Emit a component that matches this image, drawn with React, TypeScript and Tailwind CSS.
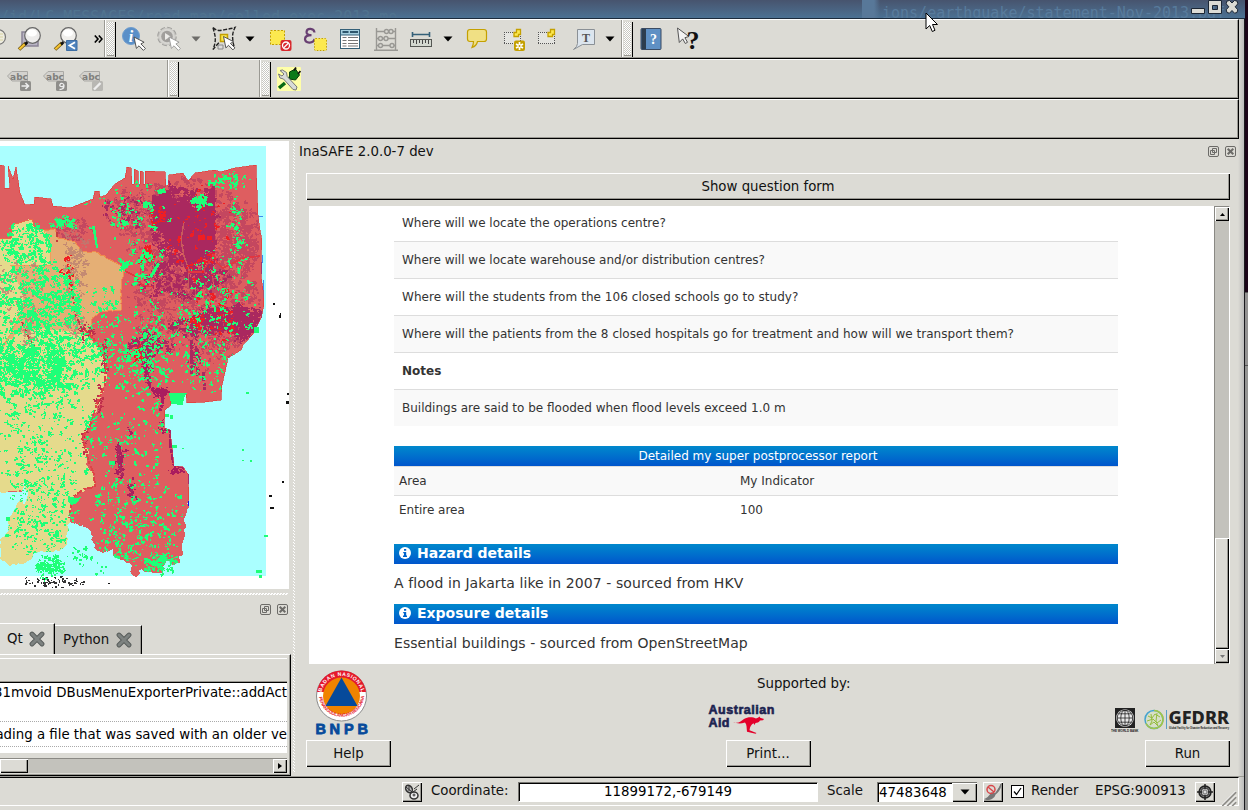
import React from 'react';

/* ---------- shared bits ---------- */

const bevel =
  'bg-[#dcdbd5] shadow-[inset_1px_1px_0_#fff,inset_-1px_-1px_0_#000,inset_-2px_-2px_0_#9a9993]';

function Slot({ w, children }: { w: number; children?: React.ReactNode }) {
  return (
    <div className="flex h-full shrink-0 items-center justify-center" style={{ width: w }}>
      {children}
    </div>
  );
}

function Grip() {
  return (
    <div className="flex h-full w-[12px] shrink-0">
      <div className="w-px bg-[#9a9993]" />
      <div className="w-px bg-white" />
      <div className="mt-[2px] mb-px ml-px w-[7px] border-b border-[#9a9993] bg-[conic-gradient(#fff_25%,#c9c8c2_0_50%,#fff_0_75%,#c9c8c2_0)] bg-[length:2px_2px]" />
      <div className="mt-[2px] ml-px w-px bg-black" />
    </div>
  );
}

function Arrow({ c = '#000' }: { c?: string }) {
  return (
    <svg width="10" height="6" viewBox="0 0 10 6" className="shrink-0">
      <path d="M0.5 0.5h9L5 5.5z" fill={c} />
    </svg>
  );
}

function Pointer({ x, y, o = 1 }: { x: number; y: number; o?: number }) {
  return (
    <path
      d="M0 0l2.4 11.4 2.6-2.6 4.4 4.6 2-2-4.5-4.5 3.2-1.7z"
      transform={`translate(${x} ${y})`}
      fill="#fff"
      stroke={o < 1 ? '#999' : '#444'}
      strokeWidth="0.9"
    />
  );
}

function Glass({ extra, tag }: { extra?: boolean; tag?: boolean }) {
  return (
    <svg width="26" height="26" viewBox="0 0 26 26" className="shrink-0">
      {extra && <path d="M5 6h16v14H5z" fill="#b9b4c4" stroke="#8a8496" strokeWidth="1.5" />}
      <path d="M2 23.500L9 17" stroke="#6b5210" strokeWidth="3.600" />
      <path d="M2.300 23.200L8.200 17.700" stroke="#f4c232" strokeWidth="2.200" />
      <path d="M8 18.500l2.500-2.500" stroke="#111" strokeWidth="2.500" />
      <circle cx="15.500" cy="9.500" r="7.800" fill="#f1f0ee" fillOpacity="0.93" stroke="#666" strokeWidth="1.200" />
      <ellipse cx="15" cy="7" rx="5" ry="3.500" fill="#fff" />
      {tag && (
        <g>
          <path d="M13.500 14.500h10.500v10H13.500z" fill="#4f83bd" stroke="#3d6da3" />
          <path d="M22 16.300l-5.500 3.200 5.500 3.200" fill="none" stroke="#fff" strokeWidth="1.800" />
        </g>
      )}
    </svg>
  );
}

function DockButtons() {
  return (
    <svg width="28" height="11" viewBox="0 0 28 11" className="shrink-0" fill="none" stroke="#6c6b68">
      <rect x="0.500" y="0.500" width="10" height="10" rx="1.500" />
      <path d="M4.500 2.500h4v4h-4zM2.500 4.500h4v4h-4z" />
      <rect x="17.500" y="0.500" width="10" height="10" rx="1.500" />
      <path d="M19.700 2.700l5.600 5.600M25.300 2.700l-5.600 5.600" strokeWidth="2" />
    </svg>
  );
}

function TabClose() {
  return (
    <svg width="16" height="16" viewBox="0 0 16 16" className="shrink-0">
      <path d="M3 3l10 10M13 3L3 13" stroke="#565b59" strokeWidth="4.800" strokeLinecap="round" />
      <path d="M3 3l10 10M13 3L3 13" stroke="#7d8280" strokeWidth="3" strokeLinecap="round" />
    </svg>
  );
}

/* ---------- toolbars ---------- */

function MainToolbar() {
  return (
    <>
      <Slot w={12}>
        <svg width="12" height="26" viewBox="0 0 12 26">
          <circle cx="-2" cy="11" r="7.500" fill="#eeece0" stroke="#777" strokeWidth="1.200" />
          <path d="M0 8h3M0 11h3M0 14h3" stroke="#d8d3a0" />
        </svg>
      </Slot>
      <Slot w={36}><Glass extra /></Slot>
      <Slot w={36}><Glass tag /></Slot>
      <Slot w={20}>
        <svg width="9" height="8" viewBox="0 0 9 8" className="ml-[8px]" fill="none" stroke="#000" strokeWidth="1.600">
          <path d="M0.800 0.500L4 4 0.800 7.500M4.800 0.500L8 4 4.800 7.500" />
        </svg>
      </Slot>
      <Grip />
      <Slot w={35}>
        <svg width="26" height="26" viewBox="0 0 26 26">
          <circle cx="10" cy="10" r="8.500" fill="#5a8fc8" stroke="#6f9dce" />
          <text x="10" y="15.500" textAnchor="middle" fontSize="16" fontStyle="italic" fontWeight="700" fill="#fff" className="font-['Liberation_Serif',serif]">i</text>
          <Pointer x={13} y={11} />
        </svg>
      </Slot>
      <Slot w={36}>
        <svg width="26" height="26" viewBox="0 0 26 26">
          <circle cx="11" cy="10.500" r="8.300" fill="#dedddb" stroke="#a3a29f" strokeWidth="3" strokeDasharray="4.500 2" />
          <circle cx="11" cy="10.500" r="8.300" fill="#d6d5d1" stroke="#c8c7c3" />
          <circle cx="11" cy="10.500" r="5.800" fill="#a19f9c" />
          <path d="M9 7l5.500 3.500L9 14z" fill="#ecebe8" />
          <Pointer x={13} y={11} o={0.5} />
        </svg>
      </Slot>
      <Slot w={17}><Arrow c="#6d6c69" /></Slot>
      <Slot w={39}>
        <svg width="26" height="26" viewBox="0 0 26 26">
          <path d="M2 1.500c3 3 6 3.500 10 2.500s8-1 12-2.500c-3 6-3 10-1 19M2 1.500c2 8 4 12 0 22l6-7" fill="none" stroke="#222" strokeWidth="1.400" strokeDasharray="4 1.500" />
          <rect x="9.500" y="8.500" width="7" height="7" fill="#fce94f" stroke="#c4a000" strokeWidth="1.500" />
          <path d="M7 19h5v4H7z" fill="#ddd" stroke="#888" />
          <Pointer x={12.5} y={10.500} />
        </svg>
      </Slot>
      <Slot w={13}><Arrow /></Slot>
      <Slot w={47}>
        <svg width="24" height="24" viewBox="0 0 24 24">
          <rect x="2.500" y="3.500" width="14" height="14" fill="#fce94f" stroke="#c4a000" strokeDasharray="2 1.500" />
          <rect x="12.500" y="13" width="11" height="11" rx="2" fill="#d8282d" />
          <circle cx="18" cy="18.500" r="3.500" fill="none" stroke="#fff" strokeWidth="1.300" />
          <path d="M15.500 21l5-5" stroke="#fff" strokeWidth="1.300" />
        </svg>
      </Slot>
      <Slot w={24}>
        <svg width="24" height="26" viewBox="0 0 24 26">
          <path d="M11.500 6.500C11 2 4 1.500 3.500 6c0 2.500 2 3.200 5 3.200C4.500 9.200 2 10.500 2 13.200 2.500 18 10.500 17.500 11.500 13" fill="none" stroke="#683f72" strokeWidth="2.200" />
          <rect x="11.500" y="12.500" width="12" height="12" rx="1" fill="#fce94f" stroke="#c4a000" strokeDasharray="1.500 1.500" />
        </svg>
      </Slot>
      <Slot w={46}>
        <svg width="22" height="22" viewBox="0 0 22 22">
          <rect x="1.500" y="1.500" width="19" height="19" fill="#fff" stroke="#346078" />
          <path d="M2 2h18v5H2z" fill="#a5cfdf" />
          <path d="M3.500 4h6M11 4h8" stroke="#2d566d" strokeWidth="2" />
          <path d="M2 7h18" stroke="#346078" />
          <path d="M3.500 9.500h4M9 9.500h10M3.500 12.500h4M9 12.500h10M3.500 15.500h4M9 15.500h10M3.500 18h4M9 18h10" stroke="#777" />
        </svg>
      </Slot>
      <Slot w={26}>
        <svg width="26" height="26" viewBox="0 0 26 26" fill="none" stroke="#999894" strokeWidth="1.400">
          <path d="M3.500 2v22M22.500 2v22M1 24.300h24M3 5.500h20M3 12.500h20M3 19.500h20" />
          <g fill="#d9d8d3">
            <circle cx="13.500" cy="5.500" r="2" /><circle cx="18" cy="5.500" r="2" />
            <circle cx="7.500" cy="12.500" r="2" /><circle cx="13" cy="12.500" r="2" />
            <circle cx="7.500" cy="19.500" r="2" /><circle cx="19" cy="19.500" r="2" />
          </g>
        </svg>
      </Slot>
      <Slot w={44}>
        <svg width="24" height="24" viewBox="0 0 24 24">
          <path d="M3 7.500h18M3.500 5v5M20.500 5v5" stroke="#346078" strokeWidth="1.600" />
          <rect x="1.500" y="12.500" width="21" height="7" fill="#d3d7cf" stroke="#555753" />
          <path d="M4.500 13v3M7.500 13v4M10.500 13v3M13.500 13v4M16.500 13v3M19.500 13v4" stroke="#444" />
        </svg>
      </Slot>
      <Slot w={10}><Arrow /></Slot>
      <Slot w={48}>
        <svg width="22" height="22" viewBox="0 0 22 22">
          <path d="M4 1.500h14q2.500 0 2.500 2.500v7q0 2.500-2.500 2.500h-6.500q-1 4.500-5.500 6 1.500-3 1.500-6H4q-2.500 0-2.500-2.500V4Q1.500 1.500 4 1.500z" fill="#f0e084" stroke="#c4a000" strokeWidth="1.200" />
        </svg>
      </Slot>
      <Slot w={24}><NewNote star /></Slot>
      <Slot w={44}><NewNote /></Slot>
      <Slot w={30}>
        <svg width="24" height="24" viewBox="0 0 24 24">
          <path d="M5.500 2.500h17v15h-12l-9 5q4-3 4-6z" fill="#dce5ee" stroke="#8a9096" />
          <text x="14" y="14.500" textAnchor="middle" fontSize="12" fontWeight="700" fill="#555" className="font-['Liberation_Serif',serif]">T</text>
        </svg>
      </Slot>
      <Slot w={21}><Arrow /></Slot>
      <Slot w={1} />
      <Grip />
      <Slot w={36}>
        <svg width="22" height="22" viewBox="0 0 22 22">
          <rect x="1" y="0.500" width="20" height="21" rx="1" fill="#5f90c4" stroke="#3a4b63" />
          <path d="M1.500 1H6v20H1.500z" fill="#2d3d4e" />
          <text x="13.500" y="16" textAnchor="middle" fontSize="14" fontWeight="700" fill="#fff" className="font-['Liberation_Serif',serif]">?</text>
        </svg>
      </Slot>
      <Slot w={36}>
        <svg width="26" height="26" viewBox="0 0 26 26">
          <path d="M3.500 2l1.800 14.500 3.400-3.600 2.600 4.600 2.200-1.200-2.600-4.600 4-1.200z" fill="#f3f3f3" stroke="#555" />
          <text x="19" y="22.500" textAnchor="middle" fontSize="26" fontWeight="700" fill="#111" className="font-['Liberation_Serif',serif]">?</text>
        </svg>
      </Slot>
    </>
  );
}

function NewNote({ star }: { star?: boolean }) {
  return (
    <svg width="24" height="24" viewBox="0 0 24 24">
      <rect x="3" y="5" width="17" height="12" fill="#e4e4e0" />
      <g shapeRendering="crispEdges" stroke="#555" strokeDasharray="1 1">
        <path d="M3 5.500h17M3 16.500h17M3.500 5v12M19.500 5v12" />
      </g>
      <path d="M13 5.500h2.500v-3h4v5h-2v2L13 9.500z" fill="#fce94f" stroke="#c4a000" strokeWidth="1.300" />
      {star && (
        <g>
          <rect x="13" y="13.500" width="11" height="10.500" rx="2" fill="#c4a000" />
          <path d="M18.500 15v8M15 17l7 4M22 17l-7 4" stroke="#fff" strokeWidth="1.700" />
          <circle cx="18.500" cy="19" r="1" fill="#c4a000" />
        </g>
      )}
    </svg>
  );
}

function Label({ kind }: { kind: number }) {
  return (
    <svg width="26" height="24" viewBox="0 0 26 24">
      <path d="M1.500 8L6 3.500h15.500v9.500H6z" fill="#d3d2ce" stroke="#aaa9a5" />
      <text x="13" y="12" textAnchor="middle" fontSize="9" fontWeight="700" fill="#807f7c" className="font-['DejaVu_Sans',sans-serif]">abc</text>
      <rect x="14" y="13" width="11" height="10" rx="1.500" fill={kind === 2 ? '#b8b7b3' : '#8f8e8b'} />
      {kind === 0 && <path d="M15.500 18h7M19.500 15l3 3-3 3" stroke="#eee" strokeWidth="1.600" fill="none" />}
      {kind === 1 && <path d="M22 17.500c-2 2-5 1-4-1s4-1 4 1-1 4-4.500 4" stroke="#eee" strokeWidth="1.300" fill="none" />}
      {kind === 2 && <path d="M16 21.500l6.500-6.500" stroke="#eee" strokeWidth="2.400" />}
    </svg>
  );
}

function LabelToolbar() {
  return (
    <>
      <Slot w={37}><div className="pt-[2px]"><Label kind={0} /></div></Slot>
      <Slot w={36}><div className="pt-[2px]"><Label kind={1} /></div></Slot>
      <Slot w={36}><div className="pt-[2px]"><Label kind={2} /></div></Slot>
      <Slot w={58} />
      <Grip />
      <Slot w={80} />
      <Grip />
      <Slot w={36}>
        <svg width="24" height="24" viewBox="0 0 24 24">
          <rect width="24" height="24" rx="1" fill="#ffffa8" />
          <path d="M2 21l6-5M15 8l-3 4" stroke="#0a6b14" strokeWidth="3.500" />
          <path d="M12.500 5l6-3 4 6-4 5-6-1z" fill="#0b7a18" stroke="#063d0b" />
          <path d="M17 3.500l2-3M21 7l2.500-3" stroke="#111" strokeWidth="1.800" />
          <path d="M3 3.500L5.500 3l4 2.500.7 4L20 20l-1 3-3-.5L6.500 12 3 11 1.500 7l3.500 2 2-2z" fill="#d8dbd8" stroke="#777" />
        </svg>
      </Slot>
    </>
  );
}

function ToolbarRow({ children }: { children?: React.ReactNode }) {
  return (
    <div className="flex h-[40px] w-[1239px] shrink-0 overflow-hidden border-t border-r border-b border-t-white border-r-black border-b-black pb-px shadow-[inset_-1px_-1px_0_#9a9993]">
      {children}
    </div>
  );
}

/* ---------- map ---------- */

function rng(seed: number) {
  let s = seed;
  return () => {
    s = (s * 1664525 + 1013904223) >>> 0;
    return s / 4294967296;
  };
}

type Cluster = [cx: number, cy: number, rx: number, ry: number, n: number, max: number];

/* Irregular patches: each one is a short random walk of small cells. */
function scatter(seed: number, clusters: Cluster[]) {
  const r = rng(seed);
  let d = '';
  for (const [cx, cy, rx, ry, n, max] of clusters) {
    for (let i = 0; i < n; i++) {
      const a = r() * Math.PI * 2;
      const k = Math.pow(r(), 0.62);
      let x = cx + Math.cos(a) * k * rx;
      let y = cy + Math.sin(a) * k * ry;
      const steps = 1 + Math.floor(Math.pow(r(), 3) * max * 1.6);
      for (let j = 0; j < steps; j++) {
        const w = r() < 0.5 ? 1 : 2;
        const h = r() < 0.6 ? 1 : 2;
        d += `M${Math.round(x)} ${Math.round(y)}h${w}v${h}h${-w}z`;
        x += (r() - 0.5) * 3.4;
        y += (r() - 0.5) * 3.4;
      }
    }
  }
  return d;
}

function rough(path: string, seed: number, amp: number) {
  const r = rng(seed);
  const n = (path.match(/[\d.]+/g) || []).map(Number);
  let d = `M${n[0]} ${n[1]}`;
  for (let i = 2; i < n.length; i += 2) {
    const x0 = n[i - 2];
    const y0 = n[i - 1];
    const x1 = n[i];
    const y1 = n[i + 1];
    const len = Math.hypot(x1 - x0, y1 - y0);
    const parts = len > 60 ? 1 : Math.max(1, Math.round(len / 3));
    for (let j = 1; j < parts; j++) {
      const t = j / parts;
      d += `L${(x0 + (x1 - x0) * t + (r() - 0.5) * amp).toFixed(1)} ${(y0 + (y1 - y0) * t + (r() - 0.5) * amp).toFixed(1)}`;
    }
    d += `L${x1} ${y1}`;
  }
  return d + 'z';
}

const COAST =
  'M0 165L4 166 4 188 10 188 8 166 13 179 16 167 20 193 25 205 34 204 35 197 51 199 53 206 70 208 80 204 93 199 95 191 99 191 100 197 106 195 115 184 125 178 127 167 131 168 132 184 134 184 134 169 138 171 138 184 140 184 140 171 143 172 143 184 145 184 145 171 165 172 166 186 168 185 169 175 183 173 188 181 195 173 215 170 220 172 235 168 256 165 258 215 260 230 262 240 261 260 261 275 263 290 264 305 261 318 253 334 243 345 241 350 228 358 225 372 222 385 221 400 205 402 187 403 186 393 170 393 171 405 165 410 164 428 170 430 172 447 174 466 183 467 188 474 189 500';
const SOUTH_COAST =
  'M189 500L186 515 185 535 182 547 180 563 174 565 166 561 162 573 150 572 142 569 136 577 132 575 132 565 115 558 113 549 103 553 94 548 92 535 88 528 70 522 68 500';
const EAST_TAN =
  'M46 230L56 228 57 237 75 242 83 252 96 252 125 268 121 285 121 310 100 312 91 320 92 335 50 350 0 380 0 265z';
const NORTH_YELLOW = 'M0 239L11 238 12 225 32 219 35 229 44 230 50 247 50 265 10 265 24 295 22 310 10 335 0 350z';
const SOUTH_YELLOW =
  'M0 352L14 335 45 328 65 331 87 336 96 345 104 357 107 372 106 385 101 397 97 410 92 418 89 426 82 438 84 446 89 452 86 465 94 474 95 486 88 487 84 492 73 497 70 505 70 520 67 533 67 545 60 551 45 552 35 553 26 563 10 566 0 559 0 539 9 531 9 519 18 502 23 500 24 508 28 494 24 481 23 491 0 492z';

const SOUTH = rough(SOUTH_COAST, 3, 4).replace('M', 'L').replace('z', '');
const LAND = `${COAST}${SOUTH}L0 500z`;
const YELLOW = rough(SOUTH_YELLOW, 9, 3);

function MapCanvas() {
  const soft = scatter(11, [
    [190, 240, 62, 62, 640, 14], [225, 280, 36, 70, 300, 14], [150, 210, 45, 28, 240, 11], [240, 235, 22, 40, 130, 14], [160, 300, 34, 35, 170, 12], [210, 340, 45, 28, 130, 9], [72, 228, 18, 12, 70, 10],
  ]);
  const dark = scatter(23, [
    [178, 225, 28, 38, 420, 18], [198, 240, 18, 52, 320, 18], [185, 278, 40, 20, 170, 14], [232, 318, 30, 13, 300, 16], [195, 325, 28, 10, 110, 11], [150, 345, 24, 8, 100, 9], [125, 210, 28, 12, 60, 8], [247, 330, 10, 13, 110, 9], [194, 345, 4, 35, 70, 6], [146, 358, 5, 28, 100, 8],
  ]);
  const green = scatter(42, [
    [30, 315, 55, 50, 420, 9], [22, 370, 46, 26, 420, 13], [60, 360, 46, 30, 300, 8], [25, 245, 26, 22, 170, 8],
    [45, 440, 55, 60, 330, 6], [40, 520, 40, 42, 240, 5], [62, 222, 14, 7, 60, 9], [125, 215, 45, 35, 60, 7],
    [140, 265, 24, 28, 60, 10], [150, 340, 50, 40, 170, 5], [218, 300, 36, 55, 120, 6], [228, 180, 22, 8, 45, 10],
    [200, 201, 9, 6, 40, 8], [237, 225, 6, 30, 45, 5], [135, 370, 34, 24, 110, 7], [205, 365, 22, 30, 60, 4],
    [130, 440, 40, 60, 110, 5], [135, 520, 50, 46, 260, 6], [160, 562, 18, 10, 80, 8], [100, 320, 22, 40, 80, 5],
    [50, 300, 30, 40, 160, 12], [195, 330, 55, 60, 90, 5],
  ]);
  const outside = scatter(77, [[50, 565, 15, 10, 100, 8], [80, 556, 13, 11, 24, 5], [166, 571, 7, 5, 16, 6], [100, 568, 6, 9, 7, 2]]);
  const red = scatter(5, [[200, 230, 32, 50, 60, 9], [158, 215, 9, 8, 26, 6], [146, 255, 6, 9, 22, 10], [68, 272, 4, 20, 26, 8], [215, 310, 34, 32, 34, 10], [138, 353, 4, 9, 26, 10], [196, 320, 5, 6, 14, 9], [200, 295, 5, 3, 8, 8], [229, 320, 5, 10, 14, 9]]);
  const grey = scatter(91, [[25, 295, 20, 40, 60, 9], [75, 265, 12, 38, 100, 12], [30, 340, 8, 14, 36, 10], [8, 280, 10, 26, 26, 8], [76, 325, 12, 14, 36, 8]]);
  const rim = scatter(66, [[104, 360, 3, 22, 40, 6], [99, 400, 4, 18, 24, 5], [86, 330, 8, 8, 24, 6], [84, 440, 3, 14, 12, 4]]);
  const river = scatter(31, [[119, 458, 4, 20, 34, 8], [131, 488, 3, 15, 16, 6], [130, 432, 3, 3, 6, 4], [176, 470, 8, 4, 26, 6], [160, 392, 9, 4, 34, 8], [163, 425, 6, 8, 20, 6]]);
  const dots = scatter(8, [[55, 582, 32, 5, 56, 2]]);
  return (
    <svg width="289" height="448" viewBox="0 141 289 448" className="block shrink-0 bg-white" shapeRendering="crispEdges">
      <defs>
        <clipPath id="land"><path d={LAND} /></clipPath>
        <clipPath id="ground"><path d={LAND} /><path d={YELLOW} /></clipPath>
      </defs>
      <rect x="0" y="146" width="265.500" height="430" fill="#aaffff" />
      <path d="M258 216.500h5M262.500 255v8M263.500 280v20" stroke="#3d8cf0" />
      <path d="M260 262h2v12h-2zM258 315h4v3h-4z" fill="#2030e8" />
      <path d="M188.500 474v10M188.500 490v17M170 430v14M172.500 450v16" stroke="#1c10e0" strokeWidth="1.500" />
      <path d={LAND} fill="#de5e60" />
      <path d={COAST} fill="none" stroke="#e23a38" strokeWidth="0.700" />
      <g clipPath="url(#land)">
        <path d={soft} fill="#c4475f" />
        <path d={rough('M152 195L168 193 176 203 190 200 194 214 183 226 181 250 170 246 162 232 153 222z', 4, 5)} fill="#aa285f" />
        <path d={rough('M190 209L204 201 215 182 215 248 208 254 197 258 194 273 186 277 184 250 184 225z', 6, 3)} fill="#aa285f" />
        <path d={dark} fill="#aa285f" />
        <path d={river} fill="#aa1c5e" />
        <path d="M145 358l2 16 3 14 11 3 2 12-3 8" fill="none" stroke="#aa1c60" strokeWidth="3" strokeDasharray="7 1 3 1" />
        <path d="M165 429h5l1 20 3 16 12 3" fill="none" stroke="#aa1c60" strokeWidth="3" strokeDasharray="9 1 4 1" />
        <path d="M118 446l1 18 4 12M132 484l-1 12" fill="none" stroke="#aa285f" strokeWidth="3" strokeDasharray="8 1" />
        <path d="M191.500 340v34M203 372l2 18" fill="none" stroke="#aa285f" strokeWidth="3" strokeDasharray="9 2 3 1" />
        <path d="M125 271l10 5 7 9 11 2" fill="none" stroke="#e23640" strokeWidth="1.500" />
        <path d="M184 222l-3 18 3 16 5 14-1 18" fill="none" stroke="#c95a5c" strokeWidth="1.500" />
        <path d="M188 272l14 0 12-17 3 8 6 5 10-5 10-5 17-2" fill="none" stroke="#e23640" strokeWidth="1.500" />
      </g>
      <path d={rough(EAST_TAN, 7, 1.5)} fill="#e5af75" stroke="#ef8b4e" />
      <path d={rough(NORTH_YELLOW, 13, 1.500)} fill="#e5da8c" />
      <path d="M0 239L11 238 12 225 32 219 35 229 44 230 56 228" fill="none" stroke="#ee6a48" />
      <path d="M44 230L50 247V265L10 265M0 350L10 335 22 310" fill="none" stroke="#efa05a" />
      <path d="M0 503V492H22L24 480 29 492 24 508 18 502 9 519 0 540z" fill="#aaffff" />
      <path d={YELLOW} fill="#e5da8c" />
      <path d={grey} fill="#b87e72" fillOpacity="0.75" />
      <path d={rim} fill="#c02f4c" />
      <path d="M85 330L93 338 100 349 106 360 105 385 99 398 94 412 90 426 82 438 86 450 88 460 94 474 95 487 84 489 73 497 69 518" fill="none" stroke="#e04444" strokeWidth="2" strokeDasharray="3 2 6 1" />
      <path d="M22 322l6 14 8 14 3 6M57 232v10M69 268l2 14 4 32 5 10" fill="none" stroke="#c43c40" strokeWidth="2" strokeDasharray="5 3 2 3" />
      <path d={red} fill="#f01e22" />
      <path d="M198 235h7v5h-7zM207 236h5v4h-5z" fill="#f01e22" />
      <g clipPath="url(#ground)"><path d={green} fill="#1eff78" /></g>
      <path d={outside} fill="#1eff78" />
      <path d="M169 393h18l-3 5-1 7-12-1zM68 496l8 2 5-1-4 6-6 2-3-4zM122 263l8-3-2 8-6 1zM92 226h3l3 22h-2zM157 263l-8 14 3 1 8-14zM157 190l8-2 1 5-8 1zM143 202h6l-1 6h-5zM121 220l7 1 1 4-6 1zM26 224l6-1 1 6-6 1zM134 448l2 0 4 7-5-1zM144 538l3-5 1 8zM196 198l6-1 2 5-8 2zM148 225l10 2-1 2-9-2zM109 461h6v4h-6zM143 333l5 0-1 5-4-1zM177 496l5-1v4l-4 0zM55 531h4v6h-4z" fill="#1eff78" />
      <path d="M254 327h5v6h-5zM172 445h5v3h-5zM170 415h3v4h-3zM165 414h4v3h-4zM246 392h3v2h-3zM242 449h2v2h-2zM242 460h2v1h-2zM250 460h2v2h-2zM256 570h6v3h-6zM259 575h3v3h-3zM264 535h4v2h-4zM6 517h4v4H6zM182 448h2v1h-2z" fill="#1eff78" />
      <path d={dots} fill="#333" />
      <path d="M273 303h2v2h-2zM279 315h2v3h-2zM280 313h1v2h-1zM287 393h2v2h-2zM286 401h3v3h-3zM282 481h2v2h-2zM269 495h3v2h-3zM270 507h4v2h-4zM108 583h2v1h-2z" fill="#111" />
    </svg>
  );
}

/* ---------- left column ---------- */

function LogDock() {
  return (
    <div className="flex h-[181px] flex-col overflow-hidden">
      <div className="flex h-[27px] shrink-0 items-center justify-end pr-[3px]"><DockButtons /></div>
      <div className="flex h-[31px] shrink-0 items-end">
        <div className="flex h-[31px] w-[55px] items-center border-t border-r border-t-white border-r-black pl-[7px] shadow-[inset_-1px_0_0_#9a9993]">
          <span className="w-[22px]">Qt</span>
          <TabClose />
        </div>
        <div className="flex h-[29px] w-[87px] items-center border-t border-r border-t-white border-r-black bg-[#c3c2bc] pl-[8px] shadow-[inset_-1px_0_0_#9a9993]">
          <span className="w-[53px] whitespace-nowrap">Python</span>
          <TabClose />
        </div>
      </div>
      <div className="flex h-[122px] w-[291px] flex-col border-t border-r border-b border-t-white border-r-black border-b-black pt-[3px] pr-[3px] shadow-[inset_-1px_-1px_0_#9a9993]">
        <div className="h-[25px] shrink-0 border-t border-b border-t-white border-b-black shadow-[inset_0_-1px_0_#9a9993]" />
        <div className="h-[70px] shrink-0 overflow-hidden bg-white whitespace-nowrap text-black">
          <div className="flex h-[39px] justify-end border-b border-dotted border-[#aaa] pt-[2px]">
            <span>[31mvoid DBusMenuExporterPrivate::addAct</span>
          </div>
          <div className="flex h-[25px] items-center justify-end border-b border-dotted border-[#aaa] pt-[2px]">
            <span>Loading a file that was saved with an older ve</span>
          </div>
        </div>
        <div className="mt-[5px] flex h-[15px] shrink-0 border-t border-t-[#8a8984] bg-[#c3c2bc]">
          <div className={`w-[28px] ${bevel}`} />
          <div className="flex-1" />
          <div className={`flex w-[14px] items-center justify-center ${bevel}`}>
            <svg width="4" height="6" viewBox="0 0 4 6"><path d="M0 0l4 3-4 3z" /></svg>
          </div>
        </div>
      </div>
    </div>
  );
}

/* ---------- report ---------- */

const QUESTIONS: [string, string][] = [
  ['Where will we locate the operations centre?', ''],
  ['Where will we locate warehouse and/or distribution centres?', ''],
  ['Where will the students from the 106 closed schools go to study?', 'tracking-[0.055px]'],
  ['Where will the patients from the 8 closed hospitals go for treatment and how will we transport them?', 'tracking-[0.03px]'],
  ['Notes', 'font-bold'],
  ['Buildings are said to be flooded when flood levels exceed 1.0 m', ''],
];

function DetailBar({ title }: { title: string }) {
  return (
    <div className="flex h-[20px] items-center gap-[6px] bg-linear-to-b from-[#0088cc] to-[#0055cc] pb-[2px] pl-[5px] text-[14px] font-bold text-white">
      <svg width="12" height="12" viewBox="0 0 12 12" className="shrink-0">
        <circle cx="6" cy="6" r="6" fill="#fff" />
        <path d="M5 2h2.200v1.700H5zM4.200 5h3v3.500h.8V10H4V8.500h1V6.300h-.8z" fill="#0064cc" />
      </svg>
      <span className="leading-[18px]">{title}</span>
    </div>
  );
}

function Report() {
  return (
    <div className="w-[905px] shrink-0 overflow-hidden bg-white pl-[85px] text-[#333]">
      <div className="w-[724px] text-[12px]">
        {QUESTIONS.map(([q, extra], i) => (
          <div
            key={q}
            className={`flex items-center border-t pl-[8px] ${i === 0 ? 'h-[35px] border-white pb-[3px]' : 'h-[37px] border-[#dddddd]'} ${i % 2 ? 'bg-[#f9f9f9]' : 'bg-white'} ${extra}`}
          >
            <span className="whitespace-nowrap">{q}</span>
          </div>
        ))}
        <div className="mt-[20px] flex h-[20px] items-center justify-center bg-linear-to-b from-[#0088cc] to-[#0055cc] pb-px pl-[4px] text-white">
          Detailed my super postprocessor report
        </div>
        <div className="flex h-[29px] items-center border-t border-[#dddddd] bg-[#f9f9f9] pl-[5px]">
          <span className="w-[341px]">Area</span>
          <span>My Indicator</span>
        </div>
        <div className="flex h-[29px] items-center border-t border-[#dddddd] pl-[5px]">
          <span className="w-[341px]">Entire area</span>
          <span>100</span>
        </div>
        <div className="h-[20px]" />
        <DetailBar title="Hazard details" />
        <div className="flex h-[40px] items-center pb-[2px] text-[14px] tracking-[0.08px]">A flood in Jakarta like in 2007 - sourced from HKV</div>
        <DetailBar title="Exposure details" />
        <div className="flex h-[40px] items-center pb-[2px] text-[14px] tracking-[0.06px]">Essential buildings - sourced from OpenStreetMap</div>
      </div>
    </div>
  );
}

function VScroll() {
  return (
    <div className="flex w-[16px] flex-col border-t border-r border-l border-t-[#8a8984] border-r-white border-l-[#8a8984] bg-[#c3c2bc] pb-px">
      <div className={`flex h-[14px] items-center justify-center ${bevel}`}>
        <svg width="5" height="3" viewBox="0 0 5 3"><path d="M2.500 0L5 3H0z" /></svg>
      </div>
      <div className="flex-1" />
      <div className={`h-[111px] ${bevel}`} />
      <div className={`flex h-[14px] items-center justify-center ${bevel}`}>
        <svg width="5" height="3" viewBox="0 0 5 3"><path d="M0 0h5L2.500 3z" fill="#777" /></svg>
      </div>
    </div>
  );
}

/* ---------- logos ---------- */

function BnpbLogo() {
  return (
    <svg width="54" height="66" viewBox="0 0 54 66" className="font-['Liberation_Sans',sans-serif]">
      <defs>
        <path id="bnpbTop" d="M6.300 26a20.200 20.200 0 0 1 40.400 0" />
        <path id="bnpbLow" d="M3.800 24a22.800 22.800 0 0 0 45.600 0" />
      </defs>
      <circle cx="26.500" cy="26" r="25" fill="#fff" stroke="#8b8b8b" />
      <path d="M2 22a24.700 24.700 0 0 1 49 0z" fill="#e5182b" />
      <circle cx="26.500" cy="26" r="18.500" fill="#f08300" />
      <path d="M26.500 7.500L42.500 36H10.500z" fill="#064a9b" />
      <text fontSize="5.200" fontWeight="700" fill="#fff"><textPath href="#bnpbTop" startOffset="4" textLength="55">BADAN NASIONAL</textPath></text>
      <text fontSize="4.600" fontWeight="700" fill="#e5182b"><textPath href="#bnpbLow" startOffset="3" textLength="66">PENANGGULANGAN BENCANA</textPath></text>
      <text x="0.500 14.500 29 42.500" y="64" fontSize="14.500" fontWeight="700" fill="#064a9b" stroke="#064a9b" strokeWidth="0.800">BNPB</text>
    </svg>
  );
}

function AusAidLogo() {
  return (
    <svg width="70" height="32" viewBox="0 0 70 32" className="font-['Liberation_Sans',sans-serif]">
      <g fill="#1b2350" stroke="#1b2350" strokeWidth="0.600" fontSize="12.500" fontWeight="700">
        <text x="0.500" y="11" textLength="66">Australian</text>
        <text x="0.500" y="23.500" textLength="21">Aid</text>
      </g>
      <path d="M25 19c5 2.500 8-1 11-3 4-2.500 9-2 12-.5 2-.5 2-1 3.500-2l.7 1.300 3.800 1.200-1 1.200-3 .3c-1 2-3 2.200-4.500 2.500l-1 2-1-1.800c-2 1-3.500 3-4 7l7 2.700-1 .8-8.500-2c-.5-4 0-7-2-9.200-5 1.500-8 1-12-.5z" fill="#e4002b" />
    </svg>
  );
}

function WorldBankLogo() {
  return (
    <svg width="28" height="25" viewBox="0 0 28 25" className="font-['Liberation_Sans',sans-serif]">
      <rect x="4" y="0" width="20" height="20" fill="#222" />
      <circle cx="14" cy="10" r="8.800" fill="#e9e9e9" />
      <g fill="none" stroke="#222" strokeWidth="0.800">
        <circle cx="14" cy="10" r="7.800" />
        <ellipse cx="14" cy="10" rx="4.200" ry="7.800" />
        <path d="M14 2v16M6 10h16M7.500 5.800h13M7.500 14.200h13" />
      </g>
      <text x="0" y="24" fontSize="3" fontWeight="700" fill="#222" textLength="27.500" lengthAdjust="spacingAndGlyphs">THE WORLD BANK</text>
    </svg>
  );
}

function GfdrrLogo() {
  return (
    <svg width="86" height="24" viewBox="0 0 86 24" className="font-['Noto_Sans',sans-serif]">
      <circle cx="10" cy="11.500" r="9" fill="#d8dfc8" stroke="#45a3cf" strokeWidth="1.500" />
      <path d="M10 2.500a9 9 0 1 1-8 13" fill="none" stroke="#a3c644" strokeWidth="1.600" />
      <g fill="none" stroke="#94bd3d" strokeWidth="1">
        <path d="M4 8l4 2 3-4 5 3M3 13l6-2 4 4 4-3M6 17l4-3 4 4M7 6l1 7-2 4M13 5l-1 8 2 5" />
      </g>
      <path d="M22.500 2v19" stroke="#5a9fc6" />
      <text x="24.500" y="15.500" fontSize="18" fontWeight="800" fill="#222" textLength="60.500" lengthAdjust="spacingAndGlyphs">GFDRR</text>
      <text x="25" y="20.500" fontSize="2.900" fontWeight="700" fill="#222" textLength="60" lengthAdjust="spacingAndGlyphs">Global Facility for Disaster Reduction and Recovery</text>
    </svg>
  );
}

/* ---------- right dock ---------- */

function InaSafeDock() {
  return (
    <div className="flex h-[637px] w-[947px] shrink-0 flex-col">
      <div className="flex h-[25px] shrink-0 items-center justify-between pr-[8px] pl-[2px]">
        <span>InaSAFE 2.0.0-7 dev</span>
        <DockButtons />
      </div>
      <div className={`mt-[9px] ml-[9px] flex h-[27px] w-[924px] shrink-0 items-center justify-center ${bevel}`}>
        Show question form
      </div>
      <div className="mt-[6px] ml-[12px] flex h-[458px] shrink-0">
        <Report />
        <VScroll />
      </div>
      <div className="ml-[9px] grid h-[76px] w-[924px] shrink-0 grid-cols-3">
        <div className="pt-[6px] pl-[9px]"><BnpbLogo /></div>
        <div className="flex flex-col items-start pt-[12px]">
          <span className="pl-[143px]">Supported by:</span>
          <div className="mt-[11px] pl-[94px]"><AusAidLogo /></div>
        </div>
        <div className="flex items-start justify-end gap-[5px] pt-[44px]">
          <WorldBankLogo />
          <GfdrrLogo />
        </div>
      </div>
      <div className="ml-[9px] flex h-[27px] w-[924px] shrink-0 justify-between">
        <div className={`flex w-[85px] items-center justify-center ${bevel}`}>Help</div>
        <div className={`flex w-[85px] items-center justify-center ${bevel}`}>Print...</div>
        <div className={`flex w-[85px] items-center justify-center ${bevel}`}>Run</div>
      </div>
    </div>
  );
}

function StatusBar() {
  return (
    <div className="flex h-[29px] w-[1239px] shrink-0 items-center border-t border-r border-b border-t-black border-r-white border-b-white pl-[402px] whitespace-nowrap">
      <div className={`flex h-[20px] w-[20px] shrink-0 items-center justify-center ${bevel}`}>
        <svg width="16" height="16" viewBox="0 0 16 16" fill="none" stroke="#333">
          <ellipse cx="5" cy="5" rx="3" ry="4" fill="#bbb" transform="rotate(-35 5 5)" strokeWidth="1.500" />
          <path d="M2 3l6 5M5 1v6M10 5l5-4M9 8l4-3" />
          <ellipse cx="10" cy="11.500" rx="4" ry="3.500" fill="#eee" strokeWidth="1.500" />
          <circle cx="10" cy="11" r="1" />
        </svg>
      </div>
      <span className="ml-[9px] w-[87px] pb-px">Coordinate:</span>
      <div className="flex h-[20px] w-[300px] shrink-0 items-center justify-center border border-t-[#777671] border-r-white border-b-white border-l-[#777671] bg-white text-black shadow-[inset_1px_1px_0_#000]">
        11899172,-679149
      </div>
      <span className="ml-[9px] w-[50px] pb-px">Scale</span>
      <div className="flex h-[20px] w-[100px] shrink-0 border-t border-l border-[#777671] bg-white shadow-[inset_1px_1px_0_#000]">
        <span className="w-[74px] pl-px leading-[20px] text-black">47483648</span>
        <div className={`flex w-[25px] items-center justify-center ${bevel}`}><Arrow /></div>
      </div>
      <div className={`ml-[6px] flex h-[20px] w-[20px] shrink-0 items-center justify-center ${bevel}`}>
        <svg width="18" height="18" viewBox="0 0 18 18">
          <path d="M17 1c-1 6-4 9-7 11M11 11c-1 4-5 6-9 5 3-1 4-4 6-6z" fill="#777" stroke="#777" strokeWidth="1.500" />
          <circle cx="7" cy="6.500" r="4" fill="none" stroke="#d8474a" strokeWidth="1.500" />
          <path d="M4 4l6 5" stroke="#d8474a" strokeWidth="1.500" />
        </svg>
      </div>
      <div className="ml-[8px] flex h-[13px] w-[13px] shrink-0 items-center justify-center border border-black bg-white">
        <svg width="9" height="9" viewBox="0 0 9 9" fill="none" stroke="#000"><path d="M1 4.500l2.500 3L8 1" strokeWidth="1.200" /></svg>
      </div>
      <span className="ml-[7px] w-[64px] pb-px">Render</span>
      <span className="w-[100px] pb-px">EPSG:900913</span>
      <div className={`flex h-[20px] w-[20px] shrink-0 items-center justify-center ${bevel}`}>
        <svg width="16" height="16" viewBox="0 0 16 16" fill="none" stroke="#222">
          <circle cx="8" cy="8" r="6" fill="#777" strokeWidth="1.500" />
          <path d="M8 0v16M0 8h16" strokeWidth="1.500" />
          <rect x="4.500" y="4.500" width="7" height="7" rx="2" fill="#bbb" stroke="#333" />
          <circle cx="8" cy="8" r="2" fill="#ddd" stroke="#777" />
        </svg>
      </div>
      <svg width="15" height="15" viewBox="0 0 15 15" className="mt-[13px] ml-[7px] shrink-0">
        <path d="M0 15L14 1M5 15l9-9M10 15l4-4" stroke="#8e8d88" strokeWidth="2" />
        <path d="M-1.500 15L14-.5M3.500 15L14 4.500M8.500 15l5.500-5.500" stroke="#fff" />
      </svg>
    </div>
  );
}

function TitleBar() {
  return (
    <div className="relative flex h-[19px] w-[1245px] shrink-0 overflow-hidden border-b border-[#1c2b3c] bg-linear-to-b from-[#47546e] to-[#4b7193] font-['DejaVu_Sans_Mono',monospace] text-[15px] leading-[18px] whitespace-pre">
      <span className="mt-[8px] w-[862px] shrink-0 overflow-hidden text-[#50738f]">/id/LC_MESSAGES/road_map/celled_exec-2013.mo</span>
      <span className="mr-[2px] w-[18px] shrink-0 bg-[linear-gradient(to_right,#587899_12px,transparent)]" />
      <span className="mt-[4px] shrink-0 text-[#587b9c]">ions/earthquake/statement-Nov-2013.pdf</span>
      <svg width="50" height="16" viewBox="0 0 50 16" className="absolute top-0 right-[5px]">
        <g fill="#dcdbd5" stroke="#1c2634">
          <path d="M1.500 8.500h13v5h-13z" />
          <path d="M18.500 0.500h13v13h-13zM22.500 5.500v4h5v-4z" fillRule="evenodd" />
          <path d="M37 1l2.500-.5 2.500 2.500L44.500.5 47 1l.8 2.800-2.600 3 2.600 3L47 12.500l-2.500.7-2.500-2.700-2.500 2.700-2.500-.7-.8-2.700 2.600-3-2.600-3z" />
        </g>
      </svg>
    </div>
  );
}

export default function App() {
  return (
    <div className="relative flex h-[810px] w-[1248px] overflow-hidden bg-[#dcdbd5] font-['DejaVu_Sans',sans-serif] text-[13.333px] leading-[16px] text-[#111]">
      <div className="flex w-[1245px] shrink-0 flex-col border-r border-[#1a1a1e] bg-[linear-gradient(to_right,transparent_1238px,#bbb_1244px)]">
        <TitleBar />
        <ToolbarRow><MainToolbar /></ToolbarRow>
        <ToolbarRow><LabelToolbar /></ToolbarRow>
        <ToolbarRow />
        <div className="flex h-[638px] shrink-0 border-b border-[#9a9993]">
          <div className="flex w-[291px] shrink-0 flex-col pt-[2px]">
            <MapCanvas />
            <div className="mt-[4px] mb-px h-[2px] w-[288px] shrink-0 bg-[conic-gradient(#fff_25%,transparent_0_50%,#fff_0_75%,transparent_0)] bg-[length:3px_2px]" />
            <LogDock />
          </div>
          <div className="mt-[2px] mr-[2px] ml-[2px] h-[631px] w-[2px] shrink-0 bg-[conic-gradient(#fff_25%,transparent_0_50%,#fff_0_75%,transparent_0)] bg-[length:2px_3px]" />
          <InaSafeDock />
        </div>
        <StatusBar />
      </div>
      <div className="flex w-[3px] flex-col bg-[#949493]">
        <div className="h-[292px] bg-[#1a0418]" />
        <div className="h-[74px] border-t border-b border-[#555] bg-[#939292]" />
      </div>
      <svg width="14" height="22" viewBox="0 0 14 22" className="absolute top-[12px] left-[925px]">
        <path d="M1 1v16l3.700-3.500L7.300 19.500l2.700-1.200L7.500 12.500h5z" fill="#fff" stroke="#000" />
      </svg>
    </div>
  );
}
